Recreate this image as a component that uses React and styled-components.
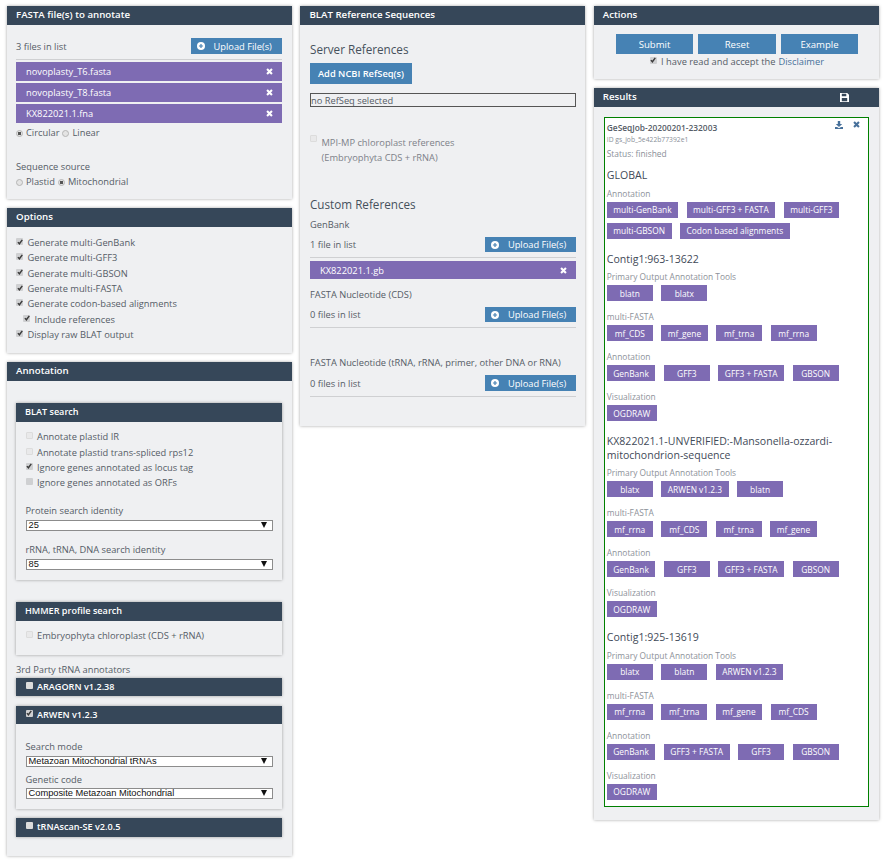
import React from "react";
import styled, { createGlobalStyle } from "styled-components";

const Global = createGlobalStyle`
  html, body { margin: 0; padding: 0; background: #fff; }
  body { font-family: "Open Sans", "Noto Sans", sans-serif; font-size: 9.3px; color: #555c66; }
  * { box-sizing: border-box; }
`;

const Page = styled.div`
  display: grid;
  grid-template-columns: 285px 285px 285px;
  column-gap: 8.4px;
  padding: 6px 0 9px 7px;
  align-items: start;
  width: 888px;
`;
const Column = styled.div`
  display: flex;
  flex-direction: column;
  gap: 9px;
`;
const Panel = styled.section`
  background: #eff0f2;
  box-shadow: 0 0 3px rgba(0, 0, 0, 0.35);
`;
const Header = styled.div`
  background: #364759;
  color: #fff;
  font-weight: 600;
  font-size: 9.7px;
  height: ${(p) => p.$h || 19}px;
  line-height: ${(p) => (p.$h || 19) - 1}px;
  padding: 0 ${(p) => p.$pr || 9}px 1px 9px;
  display: flex;
  align-items: center;
  justify-content: space-between;
`;
const HeaderLead = styled.span`
  display: flex;
  align-items: center;
  padding-left: 0.5px;
`;
const Body = styled.div`
  padding: ${(p) => p.$pt || 0}px ${(p) => p.$pr ?? 10}px ${(p) => p.$pb || 0}px ${(p) => p.$pl ?? 9}px;
`;
const Card = styled.div`
  background: #eff0f2;
  box-shadow: 0 0 3px rgba(0, 0, 0, 0.35);
  margin-top: ${(p) => p.$mt || 0}px;
  ${Body} {
    padding-left: 9.5px;
    padding-right: 9.5px;
  }
  ${Header} {
    font-size: 9.1px;
  }
`;
const FileHead = styled.div`
  display: flex;
  justify-content: space-between;
  align-items: center;
  height: ${(p) => (p.$compact ? 15 : 16)}px;
  margin-top: ${(p) => p.$mt || 0}px;
`;
const Rule = styled.hr`
  border: 0;
  border-top: 1px solid #cfd0d2;
  margin: 5px 0 2px;
`;
const UploadBtn = styled.button`
  border: 0;
  width: 91px;
  height: ${(p) => (p.$compact ? 15 : 16)}px;
  background: #4682b4;
  color: #fff;
  font: 400 9.3px "Open Sans", sans-serif;
  display: flex;
  align-items: center;
  padding: 0 0 0 5.5px;
  gap: 9px;
`;
const FileRow = styled.div`
  background: #7e6bb3;
  color: #fff;
  height: ${(p) => p.$h || 19}px;
  margin-top: ${(p) => p.$mt ?? 2}px;
  display: flex;
  justify-content: space-between;
  align-items: center;
  padding: 0 9px 0 10px;
`;
const RadioLine = styled.div`
  display: flex;
  align-items: center;
  height: 16px;
  margin-top: ${(p) => p.$mt || 0}px;
`;
const RadioDot = styled.span`
  width: 7px;
  height: 7px;
  border-radius: 50%;
  border: 1px solid #b5b5b5;
  background: ${(p) => (p.$on ? "radial-gradient(circle, #555 0 1.5px, #e4e4e4 2px)" : "#e4e4e4")};
  margin: 2px 3px 0 0;
`;
const RadioText = styled.span`
  margin-right: 3px;
`;
const Label = styled.div`
  height: 16px;
  line-height: 16px;
  margin-top: ${(p) => p.$mt || 0}px;
`;
const CheckRow = styled.label`
  display: flex;
  align-items: center;
  height: 15.3px;
  padding-left: ${(p) => p.$indent || 0}px;
`;
const BoxMark = styled.span`
  flex: none;
  width: 7px;
  height: 7px;
  margin-right: 4.5px;
  border-radius: 1px;
  background: ${(p) => (p.$light ? "#e9e9ea" : p.$white ? "#dcdcdc" : "#cfd0d2")};
  border: ${(p) => (p.$light ? "1px solid #dcdcdc" : "none")};
  display: inline-flex;
  align-items: center;
  justify-content: center;
  position: relative;
  top: -1px;
`;
const CheckList = styled.div`
  padding-top: ${(p) => p.$pt || 0}px;
  padding-bottom: ${(p) => p.$pb || 0}px;
`;
const Select = styled.div`
  height: 11px;
  background: #fff;
  border: 1px solid #8c8c8c;
  color: #111;
  font: 400 9.3px/9px "Liberation Sans", Arial, sans-serif;
  padding-left: 2px;
  display: flex;
  justify-content: space-between;
  align-items: center;
  margin-top: ${(p) => p.$mt || 0}px;
`;
const Arrow = styled.span`
  width: 0;
  height: 0;
  margin-right: 5px;
  border-left: 3px solid transparent;
  border-right: 3px solid transparent;
  border-top: 6px solid #111;
`;
const SmallHead = styled.h3`
  font-size: 11.7px;
  font-weight: 400;
  color: #46505c;
  margin: ${(p) => p.$mt || 0}px 0 0;
  height: 16px;
  line-height: 16px;
`;
const AddBtn = styled.button`
  border: 0;
  background: #4682b4;
  color: #fff;
  width: 102px;
  height: 21px;
  margin-top: 6px;
  padding: 0;
  white-space: nowrap;
  font: 600 9.3px "Open Sans", sans-serif;
  display: block;
`;
const RefBox = styled.div`
  border: 1px solid #555;
  height: 14px;
  line-height: 13px;
  margin-top: 9px;
`;
const MpiRow = styled.div`
  display: flex;
  margin-top: 27.5px;
  color: #7d8189;
  ${BoxMark} {
    top: 0.5px;
  }
`;
const MpiText = styled.div`
  line-height: 15px;
`;
const Actions = styled.div`
  display: flex;
  justify-content: center;
  gap: 5px;
  padding-top: 9px;
  margin-left: 1.5px;
`;
const ActionBtn = styled.button`
  border: 0;
  background: #4682b4;
  color: #fff;
  width: 77.5px;
  height: 20px;
  font: 400 9.6px "Open Sans", sans-serif;
`;
const Accept = styled.div`
  display: flex;
  justify-content: center;
  align-items: center;
  height: 14px;
  padding-bottom: 11px;
  box-sizing: content-box;
  margin-left: 1px;
`;
const Link = styled.a`
  color: #47709a;
  margin-left: 3px;
`;
const ResultWrap = styled.div`
  padding: 10px 10px 13px;
`;
const Job = styled.div`
  border: 1px solid #008000;
  background: #fff;
  padding: 2px 2px 0;
  height: 690px;
`;
const JobHead = styled.div`
  display: flex;
  justify-content: space-between;
  align-items: center;
  height: 14px;
  font-weight: 600;
  font-size: 8.35px;
  padding-right: 6px;
`;
const JobIcons = styled.span`
  display: flex;
  gap: 10px;
  position: relative;
  top: -2px;
`;
const JobId = styled.div`
  font-size: 6.75px;
  height: 12px;
  line-height: 12px;
  color: #8a8f98;
`;
const JobStatus = styled.div`
  color: #8a8f98;
  font-size: 8.4px;
  height: 15px;
  line-height: 15px;
`;
const SeqHead = styled.h4`
  font-size: 10.55px;
  font-weight: 400;
  color: #3f4a58;
  line-height: 13.5px;
  margin: 0 0 3px;
  padding-top: ${(p) => p.$pt ?? 6}px;
`;
const GroupLabel = styled.div`
  color: #8d9199;
  height: 16px;
  line-height: 16px;
  font-size: 8.4px;
`;
const Buttons = styled.div`
  display: flex;
  flex-wrap: wrap;
  column-gap: 8.5px;
  row-gap: 5px;
  margin-bottom: 8px;
`;
const Tag = styled.span`
  background: #7e6bb3;
  color: #fff;
  height: 16px;
  min-width: 46px;
  padding: 0 6.5px;
  display: inline-flex;
  align-items: center;
  justify-content: center;
  font-size: 8.4px;
`;

const Check = ({ on, light }) => (
  <BoxMark $light={light}>
    {on && (
      <svg width="6" height="6" viewBox="0 0 10 10">
        <path d="M1.5 5.2 L4 8 L8.8 1.5" fill="none" stroke="#3c3c3c" strokeWidth="2.4" />
      </svg>
    )}
  </BoxMark>
);
const PlusCircle = () => (
  <svg width="8" height="8" viewBox="0 0 10 10">
    <circle cx="5" cy="5" r="5" fill="#fff" />
    <path d="M5 2.4V7.6M2.4 5H7.6" stroke="#4682b4" strokeWidth="1.5" />
  </svg>
);
const Cross = ({ color = "#fff", size = 7 }) => (
  <svg width={size} height={size} viewBox="0 0 10 10">
    <path d="M1.5 1.5 8.5 8.5M8.5 1.5 1.5 8.5" stroke={color} strokeWidth="3" />
  </svg>
);
const Floppy = () => (
  <svg width="9" height="9" viewBox="0 0 10 10">
    <path fillRule="evenodd" fill="#fff" d="M0 0H8L10 2V10H0ZM2 0.8V3.6H7V0.8ZM2 5.6V9.2H8V5.6Z" />
  </svg>
);
const Download = () => (
  <svg width="8" height="8" viewBox="0 0 10 10">
    <path fill="#47709a" d="M3.5 0H6.5V3.8H9L5 7.6 1 3.8H3.5ZM0 7.4H2.6L5 9 7.4 7.4H10V10H0Z" />
  </svg>
);
const Upload = ({ compact }) => (
  <UploadBtn $compact={compact}>
    <PlusCircle />
    <span>Upload File(s)</span>
  </UploadBtn>
);
const File = ({ name, mt, h }) => (
  <FileRow $mt={mt} $h={h}>
    <span>{name}</span>
    <Cross />
  </FileRow>
);
const FilePick = ({ count, mt, compact }) => (
  <>
    <FileHead $mt={mt} $compact={compact}>
      <span>{count}</span>
      <Upload compact={compact} />
    </FileHead>
    <Rule />
  </>
);

const sections = [
  {
    title: "Contig1:963-13622",
    groups: [
      ["Primary Output Annotation Tools", ["blatn", "blatx"]],
      ["multi-FASTA", ["mf_CDS", "mf_gene", "mf_trna", "mf_rrna"]],
      ["Annotation", ["GenBank", "GFF3", "GFF3 + FASTA", "GBSON"]],
      ["Visualization", ["OGDRAW"]],
    ],
  },
  {
    title: "KX822021.1-UNVERIFIED:-Mansonella-ozzardi-mitochondrion-sequence",
    groups: [
      ["Primary Output Annotation Tools", ["blatx", "ARWEN v1.2.3", "blatn"]],
      ["multi-FASTA", ["mf_rrna", "mf_CDS", "mf_trna", "mf_gene"]],
      ["Annotation", ["GenBank", "GFF3", "GFF3 + FASTA", "GBSON"]],
      ["Visualization", ["OGDRAW"]],
    ],
  },
  {
    title: "Contig1:925-13619",
    groups: [
      ["Primary Output Annotation Tools", ["blatx", "blatn", "ARWEN v1.2.3"]],
      ["multi-FASTA", ["mf_rrna", "mf_trna", "mf_gene", "mf_CDS"]],
      ["Annotation", ["GenBank", "GFF3 + FASTA", "GFF3", "GBSON"]],
      ["Visualization", ["OGDRAW"]],
    ],
  },
];

const Group = ({ label, items }) => (
  <>
    <GroupLabel>{label}</GroupLabel>
    <Buttons>
      {items.map((t) => (
        <Tag key={t}>{t}</Tag>
      ))}
    </Buttons>
  </>
);

export default function App() {
  return (
    <>
      <Global />
      <Page>
        <Column>
          <Panel>
            <Header>FASTA file(s) to annotate</Header>
            <Body $pt={13} $pb={10}>
              <FilePick count="3 files in list" />
              <File name="novoplasty_T6.fasta" />
              <File name="novoplasty_T8.fasta" />
              <File name="KX822021.1.fna" />
              <RadioLine $mt={1}>
                <RadioDot $on />
                <RadioText>Circular</RadioText>
                <RadioDot />
                <RadioText>Linear</RadioText>
              </RadioLine>
              <Label $mt={19}>Sequence source</Label>
              <RadioLine $mt={-2}>
                <RadioDot />
                <RadioText>Plastid</RadioText>
                <RadioDot $on />
                <RadioText>Mitochondrial</RadioText>
              </RadioLine>
            </Body>
          </Panel>
          <Panel>
            <Header>Options</Header>
            <Body>
              <CheckList $pt={8} $pb={10.5}>
                <CheckRow><Check on />Generate multi-GenBank</CheckRow>
                <CheckRow><Check on />Generate multi-GFF3</CheckRow>
                <CheckRow><Check on />Generate multi-GBSON</CheckRow>
                <CheckRow><Check on />Generate multi-FASTA</CheckRow>
                <CheckRow><Check on />Generate codon-based alignments</CheckRow>
                <CheckRow $indent={7}><Check on />Include references</CheckRow>
                <CheckRow><Check on />Display raw BLAT output</CheckRow>
              </CheckList>
            </Body>
          </Panel>
          <Panel>
            <Header>Annotation</Header>
            <Body $pt={22} $pb={19}>
              <Card>
                <Header>BLAT search</Header>
                <Body $pb={10}>
                  <CheckList $pt={7.5}>
                    <CheckRow><Check light />Annotate plastid IR</CheckRow>
                    <CheckRow><Check light />Annotate plastid trans-spliced rps12</CheckRow>
                    <CheckRow><Check on />Ignore genes annotated as locus tag</CheckRow>
                    <CheckRow><Check />Ignore genes annotated as ORFs</CheckRow>
                  </CheckList>
                  <Label $mt={12.5}>Protein search identity</Label>
                  <Select $mt={1}>25<Arrow /></Select>
                  <Label $mt={11}>rRNA, tRNA, DNA search identity</Label>
                  <Select $mt={1}>85<Arrow /></Select>
                </Body>
              </Card>
              <Card $mt={22}>
                <Header>HMMER profile search</Header>
                <Body>
                  <CheckList $pt={7.5} $pb={11}>
                    <CheckRow><Check light />Embryophyta chloroplast (CDS + rRNA)</CheckRow>
                  </CheckList>
                </Body>
              </Card>
              <Label $mt={7}>3rd Party tRNA annotators</Label>
              <Card>
                <Header $h={18}>
                  <HeaderLead><BoxMark $white />ARAGORN v1.2.38</HeaderLead>
                </Header>
              </Card>
              <Card $mt={10}>
                <Header $h={18}>
                  <HeaderLead><Check on />ARWEN v1.2.3</HeaderLead>
                </Header>
                <Body $pt={15} $pb={10}>
                  <Label>Search mode</Label>
                  <Select $mt={1}>Metazoan Mitochondrial tRNAs<Arrow /></Select>
                  <Label $mt={5}>Genetic code</Label>
                  <Select>Composite Metazoan Mitochondrial<Arrow /></Select>
                </Body>
              </Card>
              <Card $mt={9}>
                <Header>
                  <HeaderLead><BoxMark $white />tRNAscan-SE v2.0.5</HeaderLead>
                </Header>
              </Card>
            </Body>
          </Panel>
        </Column>

        <Column>
          <Panel>
            <Header>BLAT Reference Sequences</Header>
            <Body $pt={16} $pb={27} $pl={9.6} $pr={9}>
              <SmallHead>Server References</SmallHead>
              <AddBtn>Add NCBI RefSeq(s)</AddBtn>
              <RefBox>no RefSeq selected</RefBox>
              <MpiRow>
                <Check light />
                <MpiText>
                  MPI-MP chloroplast references
                  <br />
                  (Embryophyta CDS + rRNA)
                </MpiText>
              </MpiRow>
              <SmallHead $mt={31.5}>Custom References</SmallHead>
              <Label $mt={5}>GenBank</Label>
              <FilePick count="1 file in list" mt={4} compact />
              <File name="KX822021.1.gb" mt={3} h={18} />
              <Label $mt={8}>FASTA Nucleotide (CDS)</Label>
              <FilePick count="0 files in list" mt={4} compact />
              <Label $mt={27}>FASTA Nucleotide (tRNA, rRNA, primer, other DNA or RNA)</Label>
              <FilePick count="0 files in list" mt={4} />
            </Body>
          </Panel>
        </Column>

        <Column>
          <Panel>
            <Header>Actions</Header>
            <Actions>
              <ActionBtn>Submit</ActionBtn>
              <ActionBtn>Reset</ActionBtn>
              <ActionBtn>Example</ActionBtn>
            </Actions>
            <Accept>
              <Check on />I have read and accept the<Link>Disclaimer</Link>
            </Accept>
          </Panel>
          <Panel>
            <Header $pr={30}>
              Results
              <Floppy />
            </Header>
            <ResultWrap>
              <Job>
                <JobHead>
                  GeSeqJob-20200201-232003
                  <JobIcons>
                    <Download />
                    <Cross color="#47709a" />
                  </JobIcons>
                </JobHead>
                <JobId>ID gs_job_5e422b77392e1</JobId>
                <JobStatus>Status: finished</JobStatus>
                <SeqHead $pt={8}>GLOBAL</SeqHead>
                <Group
                  label="Annotation"
                  items={["multi-GenBank", "multi-GFF3 + FASTA", "multi-GFF3", "multi-GBSON", "Codon based alignments"]}
                />
                {sections.map((s) => (
                  <React.Fragment key={s.title}>
                    <SeqHead>{s.title}</SeqHead>
                    {s.groups.map(([label, items]) => (
                      <Group key={label} label={label} items={items} />
                    ))}
                  </React.Fragment>
                ))}
              </Job>
            </ResultWrap>
          </Panel>
        </Column>
      </Page>
    </>
  );
}
